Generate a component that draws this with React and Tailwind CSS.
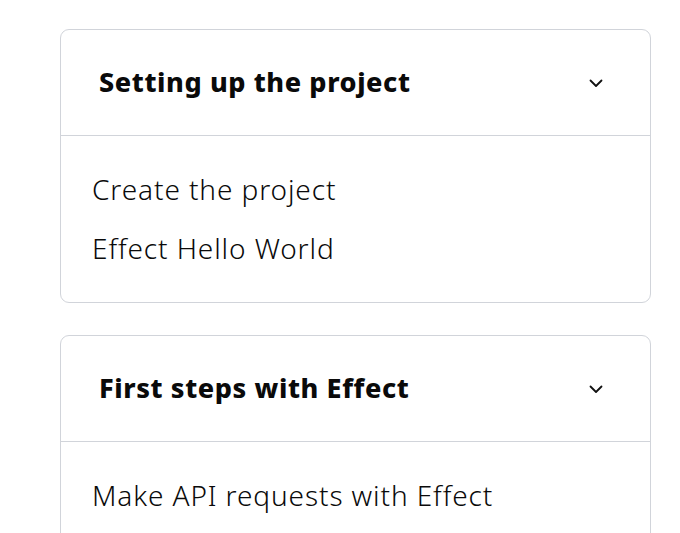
import React from "react";

function Chevron() {
  return (
    <svg width="16" height="16" viewBox="0 0 16 16" fill="none" className="shrink-0">
      <path d="M2.5 5.5 L8 11 L13.5 5.5" stroke="#111" strokeWidth="1.8" strokeLinecap="round" strokeLinejoin="round" />
    </svg>
  );
}

function Section({ title, items }) {
  return (
    <div className="rounded-[9px] border border-[#d1d4da] bg-white">
      <div className="flex h-[106px] items-center justify-between border-b border-[#d1d4da] pl-[38px] pr-[46px]">
        <h2 className="text-[27px] font-extrabold tracking-[0.6px] text-[#0a0a0a]">{title}</h2>
        <Chevron />
      </div>
      <ul className="flex flex-col gap-[26px] px-[31px] pt-[37px] pb-[37px]">
        {items.map((t) => (
          <li key={t} className="text-[28px] leading-[33px] font-light tracking-[0.9px] text-[#0a0a0a]">{t}</li>
        ))}
      </ul>
    </div>
  );
}

export default function App() {
  return (
    <div className="h-[533px] overflow-hidden bg-white pt-[29px] pl-[60px] pr-[29px]" style={{ fontFamily: '"Noto Sans", "Open Sans", sans-serif' }}>
      <div className="flex flex-col gap-[32px]">
        <Section title="Setting up the project" items={["Create the project", "Effect Hello World"]} />
        <Section title="First steps with Effect" items={["Make API requests with Effect"]} />
      </div>
    </div>
  );
}
